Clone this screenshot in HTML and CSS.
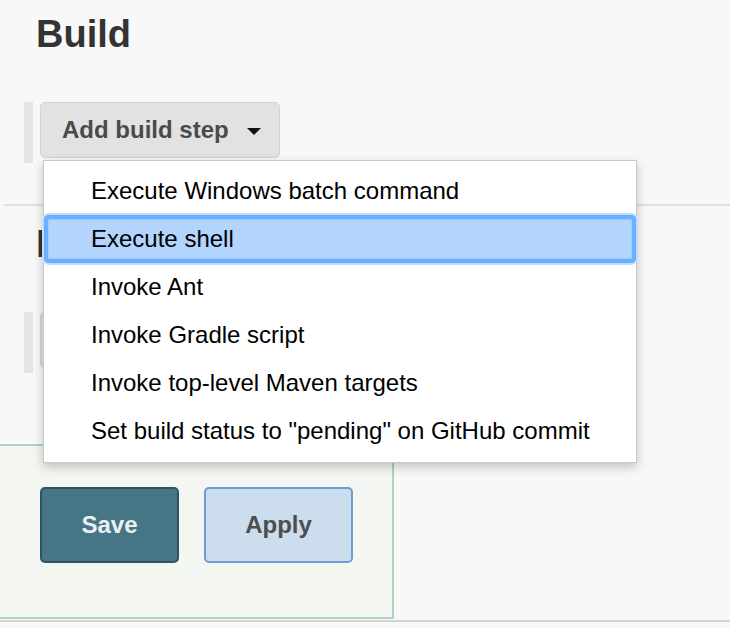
FILE: index.html
```html
<!DOCTYPE html>
<html>
<head>
<meta charset="utf-8">
<link rel="stylesheet" href="styles.css">
</head>
<body>
<div class="page">
  <section class="section">
    <h1 class="heading">Build</h1>
    <div class="chunk-row">
      <div class="handle"></div>
      <button class="menu-btn">Add build step <span class="caret"></span></button>
    </div>
  </section>
  <hr class="divider">
  <section class="section">
    <h1 class="heading heading-2">Post-build Actions</h1>
    <div class="chunk-row">
      <div class="handle"></div>
      <button class="menu-btn">Add post-build action <span class="caret"></span></button>
    </div>
  </section>
  <div class="bottom-bar">
    <button class="btn btn-save">Save</button>
    <button class="btn btn-apply">Apply</button>
  </div>
  <div class="footer-line"></div>

  <ul class="dropdown">
    <li class="item">Execute Windows batch command</li>
    <li class="item selected">Execute shell</li>
    <li class="item">Invoke Ant</li>
    <li class="item">Invoke Gradle script</li>
    <li class="item">Invoke top-level Maven targets</li>
    <li class="item">Set build status to "pending" on GitHub commit</li>
  </ul>
</div>
</body>
</html>
```

FILE: styles.css
```css
html, body {
  margin: 0;
  padding: 0;
  background: #f8f8f8;
  font-family: "Liberation Sans", Arial, Helvetica, sans-serif;
  overflow: hidden;
}

* {
  box-sizing: border-box;
}

.page {
  position: relative;
  width: 730px;
  height: 628px;
}

.section {
  padding-left: 36px;
}

.heading {
  margin: 0;
  padding-top: 12px;
  height: 56px;
  font-size: 38px;
  line-height: 44px;
  font-weight: bold;
  color: #333;
  white-space: nowrap;
}

.heading-2 {
  padding-top: 16px;
  height: 60px;
}

.chunk-row {
  display: flex;
  align-items: flex-start;
  gap: 7px;
  height: 61px;
  margin-top: 46px;
  margin-left: -12px;
}

.handle {
  width: 9px;
  height: 61px;
  background: #e4e4e4;
}

.menu-btn {
  display: flex;
  align-items: center;
  height: 56px;
  margin: 0;
  padding: 0 18px 0 21px;
  background: #e2e2e2;
  border: 1px solid #d2d2d2;
  border-radius: 5px;
  font-family: inherit;
  font-size: 24px;
  font-weight: bold;
  color: #4a4a4a;
  white-space: nowrap;
}

.caret {
  width: 0;
  height: 0;
  margin-left: 18px;
  margin-top: 2px;
  border-left: 7px solid transparent;
  border-right: 7px solid transparent;
  border-top: 7px solid #111;
}

.divider {
  display: block;
  margin: 41px 0 0 4px;
  border: 0;
  height: 2px;
  background: #e0e0e0;
}

.bottom-bar {
  display: flex;
  align-items: flex-start;
  gap: 25px;
  width: 394px;
  height: 175px;
  margin-top: 71px;
  padding: 41px 0 0 40px;
  background: #f4f7f1;
  border-top: 2px solid #aed3be;
  border-right: 2px solid #aed3be;
  border-bottom: 2px solid #aed3be;
}

.btn {
  height: 76px;
  margin: 0;
  border-radius: 5px;
  font-family: inherit;
  font-size: 24px;
  font-weight: bold;
}

.btn-save {
  width: 139px;
  background: #467686;
  border: 2px solid #2e5462;
  color: #eaf0f2;
}

.btn-apply {
  width: 149px;
  background: #ccdded;
  border: 2px solid #6b9fd3;
  color: #4d4d4d;
}

.footer-line {
  margin-top: 1px;
  height: 2px;
  background: #d4d4d4;
}

.dropdown {
  position: absolute;
  left: 43px;
  top: 160px;
  width: 594px;
  margin: 0;
  padding: 6px 0 7px;
  list-style: none;
  background: #fff;
  border: 1px solid #c9c9c9;
  box-shadow: 0 4px 10px rgba(0, 0, 0, 0.22);
}

.item {
  height: 48px;
  line-height: 48px;
  padding-left: 47px;
  font-size: 24px;
  color: #000;
  white-space: nowrap;
}

.item.selected {
  background: #b3d4fd;
  border-radius: 5px;
  box-shadow: inset 0 0 0 1px #62abfe, inset 0 0 0 4px #6cb1ff, inset 0 0 0 5px #9dcbff, 0 0 0 2px #c3defd;
}
```
